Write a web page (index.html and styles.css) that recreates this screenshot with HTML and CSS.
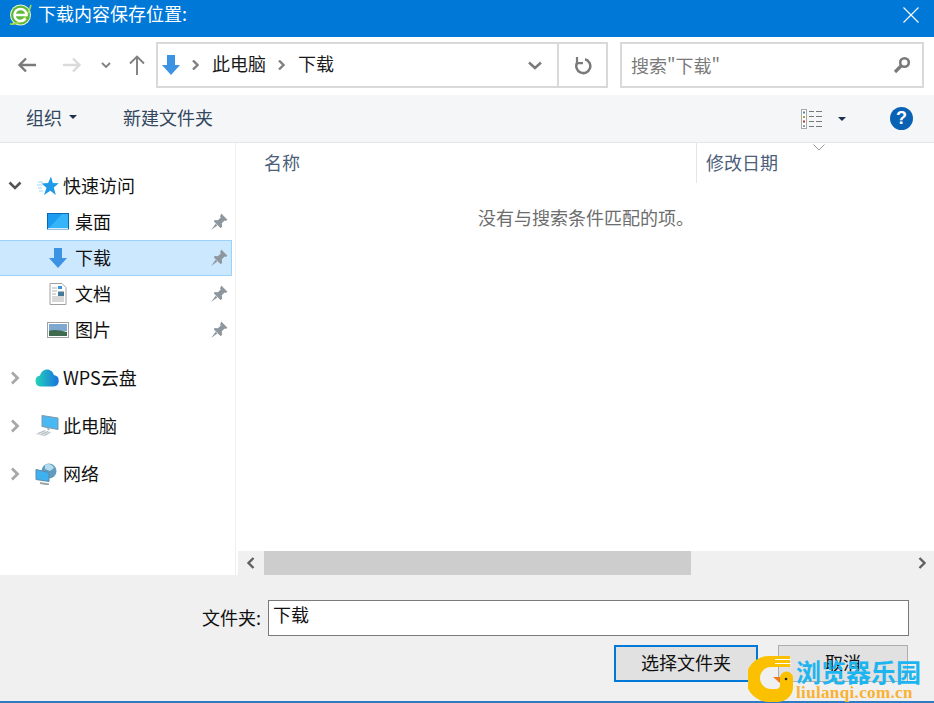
FILE: index.html

```html
<!DOCTYPE html>
<html lang="zh-CN">
<head>
  <meta charset="UTF-8" />
  <meta name="viewport" content="width=device-width, initial-scale=1.0"/>
  <title>下载内容保存位置</title>
  <link rel="stylesheet" href="styles.css">
</head>
<body>
<div class="dialog">

  <!-- title bar -->
  <header class="titlebar">
    <svg class="app-logo" width="24" height="24" viewBox="0 0 24 24">
      <circle cx="11.500" cy="12" r="10.500" fill="#e8f5d8"/>
      <circle cx="11.500" cy="12" r="9.500" fill="#5fb83a"/>
      <path d="M1 21C8 22 18 17 22 2" fill="none" stroke="#a8dc4e" stroke-width="1.600"/>
      <path d="M5.500 12h12c0-3.700-2.700-6-6-6s-6 2.500-6 6 2.700 6 6 6c2.200 0 4-1 5-2.700" fill="none" stroke="#fff" stroke-width="2.600"/>
    </svg>
    <span class="title-text">下载内容保存位置:</span>
    <svg class="close-icon" width="16" height="16" viewBox="0 0 16 16">
      <path d="M.5.500l15 15M15.500.500l-15 15" stroke="#fff" stroke-width="1.100" fill="none"/>
    </svg>
  </header>

  <!-- back / forward / address / search -->
  <div class="navbar">
    <div class="nav-buttons">
      <svg class="nav-back" width="20" height="16" viewBox="0 0 20 16"><path d="M9 1.500L2.500 8 9 14.500M3 8h16" fill="none" stroke="#7a7a7a" stroke-width="2.400"/></svg>
      <svg class="nav-forward" width="20" height="16" viewBox="0 0 20 16"><path d="M11 1.500L17.500 8 11 14.500M17 8H1" fill="none" stroke="#dadada" stroke-width="2.400"/></svg>
      <svg class="nav-recent" width="10" height="7" viewBox="0 0 10 7"><path d="M1 1l4 4 4-4" fill="none" stroke="#808080" stroke-width="1.800"/></svg>
      <svg class="nav-up" width="16" height="20" viewBox="0 0 16 20"><path d="M1 8.500L8 1.500l7 7M8 2v18" fill="none" stroke="#808080" stroke-width="1.900"/></svg>
    </div>
    <div class="address">
      <svg class="addr-icon" width="20" height="22" viewBox="0 0 20 22"><path d="M6 1h8v10h5l-9 10-9-10h5z" fill="#3c93e4"/></svg>
      <svg class="crumb-sep" width="7" height="10" viewBox="0 0 7 10"><path d="M1 .5l4.500 4.500L1 9.500" fill="none" stroke="#808080" stroke-width="2.400"/></svg>
      <span class="crumb">此电脑</span>
      <svg class="crumb-sep" width="7" height="10" viewBox="0 0 7 10"><path d="M1 .5l4.500 4.500L1 9.500" fill="none" stroke="#808080" stroke-width="2.400"/></svg>
      <span class="crumb">下载</span>
      <svg class="addr-drop" width="14" height="9" viewBox="0 0 14 9"><path d="M1 1.500l6 5.500 6-5.500" fill="none" stroke="#7a7a7a" stroke-width="2.400"/></svg>
      <div class="addr-refresh">
        <svg width="18" height="20" viewBox="0 0 18 20"><path d="M11 4.300A7 7 0 1 1 3.300 7.500" fill="none" stroke="#7a7a7a" stroke-width="2.500"/><path d="M3 2v6.200h6" fill="none" stroke="#7a7a7a" stroke-width="2.200"/></svg>
      </div>
    </div>
    <div class="search">
      <span class="search-text">搜索"下载"</span>
      <svg width="18" height="18" viewBox="0 0 18 18"><circle cx="11.500" cy="6.500" r="4.300" fill="none" stroke="#7a7a7a" stroke-width="2.600"/><path d="M8 10l-6 6" stroke="#7a7a7a" stroke-width="3.200"/></svg>
    </div>
  </div>

  <!-- command bar -->
  <div class="cmdbar">
    <span class="cmd">组织<i class="caret"></i></span>
    <span class="cmd cmd-new">新建文件夹</span>
    <div class="cmd-right">
      <svg class="view-icon" width="22" height="20" viewBox="0 0 22 20">
        <rect x=".5" y=".5" width="5" height="19" fill="#fff" stroke="#a8a8a8"/>
        <rect x="2" y="2.500" width="2" height="2" fill="#4a8ea8"/>
        <rect x="2" y="7" width="2" height="2" fill="#a8a030"/>
        <rect x="2" y="11.500" width="2" height="2" fill="#a83a20"/>
        <rect x="2" y="16" width="2" height="2" fill="#8a9aa8"/>
        <path d="M8 2.500h5M15 2.500h6M8 7.500h5M15 7.500h6M8 12.500h5M15 12.500h6M8 17.500h5M15 17.500h6" stroke="#777" stroke-width="1"/>
      </svg>
      <i class="caret view-caret"></i>
      <span class="help">?</span>
    </div>
  </div>

  <div class="main">
    <!-- folder tree -->
    <nav class="tree">
      <div class="tree-group">
        <div class="row row-root">
          <svg class="twist" width="14" height="10" viewBox="0 0 14 10"><path d="M1.500 1.500L7 7l5.500-5.500" fill="none" stroke="#555" stroke-width="2.600"/></svg>
          <svg class="row-icon" width="24" height="20" viewBox="0 0 24 20"><path d="M16 .5l1.800 6.500 6 .3-5 4.200 2 7.500-5.500-4.200-6.300 4.200 2.500-7.300-5-4.200 6.600-.5z" fill="#1f9bea"/><path d="M3 6h5M2 9h5M3 12h4M4 15h4" stroke="#9fd4f5" stroke-width="1"/></svg>
          <span>快速访问</span>
        </div>
        <div class="row row-child">
          <svg class="row-icon" width="22" height="18" viewBox="0 0 22 18"><rect x=".5" y=".5" width="21" height="15.500" fill="#1a9cf0" stroke="#0b68b5"/><path d="M2 15L15 1h6v14z" fill="#35b4fa"/><rect x="1" y="15" width="20" height="1.200" fill="#d8eefa"/></svg>
          <span>桌面</span>
          <svg class="pin" width="18" height="18" viewBox="0 0 16 16"><path d="M10 .5l5.500 5.500-1.500 1-1-.4-2.500 2.600.3 3-1.300 1.300-6-6L4 6.200l3 .3 2.600-2.500L9 3z M5 9.500L1 15l5.500-4z" fill="#8e979e"/></svg>
        </div>
        <div class="row row-child row-selected">
          <svg class="row-icon" width="20" height="22" viewBox="0 0 20 22"><path d="M6 1h8v10h5l-9 10-9-10h5z" fill="#3c93e4"/></svg>
          <span>下载</span>
          <svg class="pin" width="18" height="18" viewBox="0 0 16 16"><path d="M10 .5l5.500 5.500-1.500 1-1-.4-2.500 2.600.3 3-1.300 1.300-6-6L4 6.200l3 .3 2.600-2.500L9 3z M5 9.500L1 15l5.500-4z" fill="#8e979e"/></svg>
        </div>
        <div class="row row-child">
          <svg class="row-icon" width="18" height="22" viewBox="0 0 18 22"><path d="M1 .5h12l4 4v17H1z" fill="#fff" stroke="#a0a0a0"/><path d="M3 5h5M3 8h5M3 11h4M3 14h12M3 16h12M3 18h12" stroke="#b0b0b0"/><rect x="9" y="8.500" width="6" height="4.500" fill="#4a7a9a"/><path d="M9 3h4v3H9z" fill="#3c93e4"/></svg>
          <span>文档</span>
          <svg class="pin" width="18" height="18" viewBox="0 0 16 16"><path d="M10 .5l5.500 5.500-1.500 1-1-.4-2.500 2.600.3 3-1.300 1.300-6-6L4 6.200l3 .3 2.600-2.500L9 3z M5 9.500L1 15l5.500-4z" fill="#8e979e"/></svg>
        </div>
        <div class="row row-child">
          <svg class="row-icon" width="22" height="16" viewBox="0 0 22 16"><rect x=".5" y=".5" width="21" height="15" fill="#fff" stroke="#a0a0a0"/><rect x="2" y="2" width="18" height="7" fill="#7fa8d0"/><path d="M2 9c5-2 10-1 18 1v4H2z" fill="#3f6a50"/></svg>
          <span>图片</span>
          <svg class="pin" width="18" height="18" viewBox="0 0 16 16"><path d="M10 .5l5.500 5.500-1.500 1-1-.4-2.500 2.600.3 3-1.300 1.300-6-6L4 6.200l3 .3 2.600-2.500L9 3z M5 9.500L1 15l5.500-4z" fill="#8e979e"/></svg>
        </div>
      </div>

      <div class="row row-root row-spaced">
        <svg class="twist twist-closed" width="10" height="14" viewBox="0 0 10 14"><path d="M2 1.500L7.500 7 2 12.500" fill="none" stroke="#a8a8a8" stroke-width="2.800"/></svg>
        <svg class="row-icon" width="24" height="18" viewBox="0 0 24 18">
          <defs><linearGradient id="wpsCloud" x1="0" x2="1"><stop offset="0" stop-color="#22d3b8"/><stop offset="1" stop-color="#1a72e0"/></linearGradient></defs>
          <path d="M6 17.500a5.500 5.500 0 0 1-1-10.900C6 2.800 9 .5 12 .5c3.400 0 6 2.300 6.800 5.500a5.800 5.800 0 0 1-.3 11.500z" fill="url(#wpsCloud)"/>
        </svg>
        <span>WPS云盘</span>
      </div>
      <div class="row row-root row-spaced">
        <svg class="twist twist-closed" width="10" height="14" viewBox="0 0 10 14"><path d="M2 1.500L7.500 7 2 12.500" fill="none" stroke="#a8a8a8" stroke-width="2.800"/></svg>
        <svg class="row-icon" width="24" height="22" viewBox="0 0 24 22"><path d="M7 .5l16 2.500v11.500L7 11.500z" fill="#4ab8f2" stroke="#7d98a8"/><path d="M12 12.500l3 1.500-2 1.500z" fill="#9aa4aa"/><path d="M0 19l9-3.500 8 1.500-8 4.500z" fill="#dfe3e6"/><path d="M3 18.500l7-3M6 19.500l7-3M9 20.500l6-3" stroke="#a5adb2" stroke-width=".8"/></svg>
        <span>此电脑</span>
      </div>
      <div class="row row-root row-spaced">
        <svg class="twist twist-closed" width="10" height="14" viewBox="0 0 10 14"><path d="M2 1.500L7.500 7 2 12.500" fill="none" stroke="#a8a8a8" stroke-width="2.800"/></svg>
        <svg class="row-icon" width="24" height="22" viewBox="0 0 24 22"><circle cx="14" cy="8" r="7.500" fill="#5f9cc0"/><path d="M10 2c3-2 7-1 9 3l-4 3-5-2z" fill="#b5dbee"/><path d="M1 6.500l13 3v9l-13-2z" fill="#3fb0f0" stroke="#5d8aa8"/><path d="M5 20l9 1.500" stroke="#9aa4aa" stroke-width="2"/></svg>
        <span>网络</span>
      </div>
    </nav>

    <!-- file list -->
    <section class="files">
      <div class="file-head">
        <div class="col col-name">名称</div>
        <div class="col col-date">修改日期</div>
        <svg class="sort-mark" width="12" height="7" viewBox="0 0 12 7"><path d="M.5.500L6 6l5.500-5.500" fill="none" stroke="#9a9a9a"/></svg>
      </div>
      <div class="file-body">没有与搜索条件匹配的项。</div>
      <div class="hscroll">
        <button class="scroll-btn" type="button"><svg width="10" height="12" viewBox="0 0 10 12"><path d="M7.500 1L2.500 6l5 5" fill="none" stroke="#606060" stroke-width="2.400"/></svg></button>
        <div class="scroll-track"><div class="scroll-thumb"></div></div>
        <button class="scroll-btn scroll-btn-end" type="button"><svg width="10" height="12" viewBox="0 0 10 12"><path d="M2.500 1l5 5-5 5" fill="none" stroke="#606060" stroke-width="2.400"/></svg></button>
      </div>
    </section>
  </div>

  <!-- folder name and actions -->
  <footer class="footer">
    <div class="name-row">
      <label class="name-label" for="folderName">文件夹:</label>
      <input class="name-input" id="folderName" type="text" value="下载">
    </div>
    <div class="button-row">
      <button class="btn btn-primary" type="button">选择文件夹</button>
      <button class="btn" type="button">取消</button>
    </div>
  </footer>
</div>

<!-- site mark in the corner -->
<div class="sitemark">
  <svg width="46" height="46" viewBox="0 0 46 46">
    <path d="M21 0H42V11H23a11 11 0 0 0 0 22h5c3 0 4-2 4-4V22a6.500 6.500 0 0 1 13 0v9a15 15 0 0 1-15 15H21A23 23 0 0 1 21 0z" fill="#fbc000"/>
    <path d="M27 3.500h16M27 7.500h16" stroke="#fff" stroke-width="1.200"/>
    <path d="M25 21h7v6z" fill="#ee7a1c"/>
    <circle cx="38" cy="23" r="1.300" fill="#222"/>
  </svg>
  <div class="sitemark-text">
    <div class="sitemark-cn">浏览器乐园</div>
    <div class="sitemark-url">liulanqi.com.cn</div>
  </div>
</div>
</body>
</html>
```

FILE: styles.css

```css
* {
  box-sizing: border-box;
}
html, body {
  margin: 0;
  height: 100%;
  overflow: hidden;
}
body {
  position: relative;
  font-family: "Noto Sans CJK SC", "Liberation Sans", sans-serif;
  font-size: 18px;
  color: #1a1a1a;
  background: #f0f0f0;
}
.dialog {
  display: flex;
  flex-direction: column;
  height: 703px;
  border-bottom: 2px solid #2b7cc4;
}

/* title bar */
.titlebar {
  display: flex;
  align-items: center;
  height: 37px;
  padding: 0 15px 8px 9px;
  background: #0078d7;
  color: #fff;
}
.app-logo {
  margin-right: 5px;
}
.title-text {
  flex: 1;
  margin-bottom: 3px;
  line-height: 26px;
}

/* navigation */
.navbar {
  display: flex;
  height: 58px;
  padding: 5px 10px 7px 0;
  background: #fff;
}
.nav-buttons {
  display: flex;
  align-items: center;
  width: 156px;
  padding: 0 0 0 17px;
}
.nav-forward {
  margin-left: 25px;
}
.nav-recent {
  margin-left: 19px;
}
.nav-up {
  margin-left: 18px;
}
.address {
  display: flex;
  align-items: center;
  width: 452px;
  height: 46px;
  padding-left: 3px;
  border: 2px solid #d9d9d9;
}
.addr-icon {
  margin-right: 11px;
}
.crumb {
  margin: 0 12px 4px 13px;
  line-height: 24px;
}
.addr-drop {
  margin-left: auto;
  margin-right: 15px;
}
.addr-refresh {
  display: flex;
  align-items: center;
  justify-content: center;
  width: 49px;
  height: 100%;
  border-left: 2px solid #d9d9d9;
}
.search {
  display: flex;
  align-items: center;
  justify-content: space-between;
  width: 304px;
  height: 46px;
  margin-left: 12px;
  padding: 0 11px 0 9px;
  border: 2px solid #d9d9d9;
}
.search-text {
  color: #7a7a7a;
}

/* command bar */
.cmdbar {
  display: flex;
  align-items: center;
  height: 48px;
  padding: 0 21px 0 26px;
  background: #f5f6f7;
  border-bottom: 1px solid #e5e5e5;
  color: #33475f;
}
.cmd {
  display: flex;
  align-items: center;
  padding-bottom: 3px;
}
.cmd-new {
  margin-left: 46px;
}
.caret {
  width: 0;
  height: 0;
  margin-left: 7px;
  border: 4px solid transparent;
  border-top: 4px solid #1e3050;
  border-bottom: 0;
}
.cmd-right {
  display: flex;
  align-items: center;
  margin-left: auto;
}
.view-caret {
  margin-left: 15px;
}
.help {
  width: 23px;
  height: 23px;
  margin-left: 44px;
  border-radius: 50%;
  background: #0a62b4;
  color: #fff;
  font-family: "Liberation Sans", sans-serif;
  font-weight: bold;
  font-size: 18px;
  line-height: 23px;
  text-align: center;
}

/* main panes */
.main {
  display: flex;
  flex: 1;
  min-height: 0;
  background: #fff;
}
.tree {
  width: 236px;
  padding: 25px 3px 0 0;
  border-right: 1px solid #f0f0f0;
  color: #111;
}
.row {
  display: flex;
  align-items: center;
  height: 36px;
}
.row span {
  margin-bottom: 3px;
}
.row-root {
  padding-left: 8px;
}
.row-spaced {
  margin-top: 12px;
}
.twist {
  width: 14px;
  flex: none;
}
.row-root .row-icon {
  flex: none;
  width: 24px;
  margin: 0 4px 0 13px;
}
.row-child {
  padding-left: 47px;
  border: 1px solid transparent;
  border-left-width: 0;
}
.row-child .row-icon {
  flex: none;
  width: 22px;
  margin-right: 6px;
}
.pin {
  margin-left: auto;
  margin-right: 3px;
}
.row-selected {
  background: #cce8ff;
  border: 1px solid #99d1ff;
  border-left-width: 0;
}

.files {
  display: flex;
  flex: 1;
  flex-direction: column;
  min-width: 0;
}
.file-head {
  position: relative;
  display: flex;
  height: 40px;
  color: #4c607a;
}
.col {
  display: flex;
  align-items: center;
  padding-bottom: 2px;
}
.col-name {
  width: 461px;
  padding-left: 28px;
  border-right: 1px solid #e5e5e5;
}
.col-date {
  padding-left: 9px;
}
.sort-mark {
  position: absolute;
  top: 1px;
  left: 577px;
}
.file-body {
  flex: 1;
  padding-top: 21px;
  padding-left: 242px;
  color: #6d6d6d;
  line-height: 26px;
}
.hscroll {
  display: flex;
  height: 24px;
  margin-left: 2px;
  background: #f0f0f0;
}
.scroll-btn {
  display: flex;
  align-items: center;
  justify-content: center;
  width: 26px;
  padding: 0;
  border: 0;
  background: #f0f0f0;
}
.scroll-btn-end {
  width: 24px;
}
.scroll-track {
  flex: 1;
}
.scroll-thumb {
  width: 427px;
  height: 100%;
  background: #cdcdcd;
}

/* footer */
.footer {
  height: 126px;
  padding: 25px 25px 0 0;
  background: #f0f0f0;
  color: #111;
}
.name-row {
  display: flex;
  align-items: center;
  justify-content: flex-end;
}
.name-label {
  margin-right: 7px;
  margin-bottom: 3px;
}
.name-input {
  width: 641px;
  height: 36px;
  padding: 0 4px 8px;
  border: 1px solid #7a7a7a;
  background: #fff;
  font: inherit;
  color: #111;
}
.button-row {
  display: flex;
  justify-content: flex-end;
  gap: 20px;
  margin-top: 9px;
  padding-right: 1px;
}
.btn {
  width: 130px;
  height: 37px;
  padding: 0 0 3px;
  border: 1px solid #adadad;
  background: #e1e1e1;
  font: inherit;
  color: #111;
}
.btn-primary {
  width: 144px;
  border: 2px solid #0078d7;
}

/* corner site mark */
.sitemark {
  position: absolute;
  left: 748px;
  top: 656px;
  display: flex;
  gap: 2px;
}
.sitemark-text {
  font-weight: 700;
}
.sitemark-cn {
  margin-top: 1px;
  font-size: 25px;
  line-height: 28px;
  color: #1cb5f0;
  white-space: nowrap;
}
.sitemark-url {
  font-family: "Liberation Serif", serif;
  font-size: 17px;
  line-height: 16px;
  letter-spacing: .35px;
  color: #f9b233;
  white-space: nowrap;
}
```
